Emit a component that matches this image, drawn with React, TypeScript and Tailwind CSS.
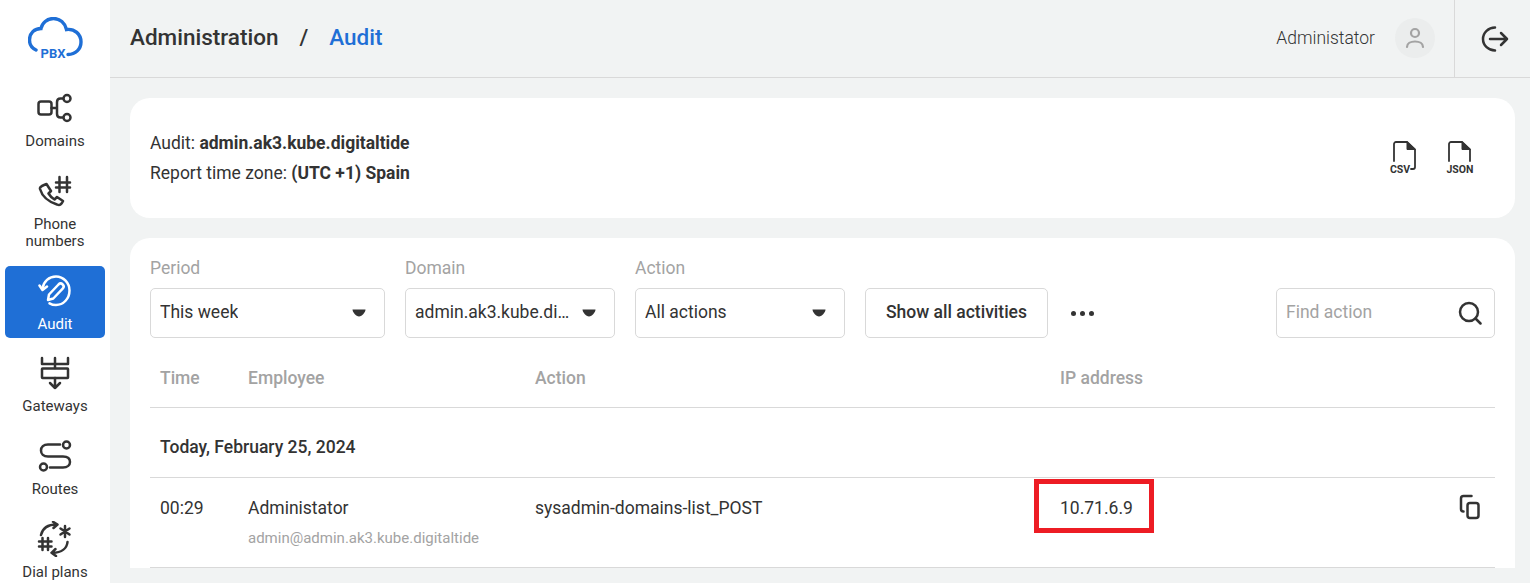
import React from 'react';

const iconProps = {
  fill: 'none',
  stroke: 'currentColor',
  strokeWidth: 2.500,
  strokeLinecap: 'round' as const,
  strokeLinejoin: 'round' as const,
};

function Logo() {
  return (
    <svg width="56" height="44" viewBox="0 0 56 44" className="text-[#1f6fd6]">
      <path
        d="M8 33C3.500 31 1.500 27 1.500 23C1.500 16 6.500 11.500 13 11.500C14 6 19 1.500 25.500 1.500C32 1.500 37 6 38.500 12.500C46.500 11.500 53 17 53 25C53 32 47.500 37.500 40 37.500"
        fill="none"
        stroke="currentColor"
        strokeWidth="3.400"
        strokeLinecap="round"
      />
      <text x="25" y="40.500" textAnchor="middle" fill="currentColor" className="font-['Roboto',sans-serif] text-[13px] font-bold">PBX</text>
    </svg>
  );
}

function DomainsIcon() {
  return (
    <svg width="36" height="32" viewBox="0 0 36 32" {...iconProps}>
      <rect x="1.500" y="9.500" width="13" height="13" rx="2.500" />
      <path d="M14.500 16H20M20 16V10C20 7.500 21 6.500 23.500 6.500H26M20 16V22C20 24.500 21 25.500 23.500 25.500H26" />
      <circle cx="30" cy="6.500" r="3.500" />
      <circle cx="30" cy="25.500" r="3.500" />
    </svg>
  );
}

function PhoneNumbersIcon() {
  return (
    <svg width="34" height="34" viewBox="0 0 34 34" {...iconProps}>
      <path d="M6 11L8.500 10L13 17L10.500 19.500C12 22 14 24 16.500 25.500L19 23L25 27L23.500 29.500C22.500 31 21 31.500 19 30.500C10 27.500 4 22 2 15C1.500 13 3.500 12 6 11Z" />
      <path d="M21.500 3V18M29 3V18M18 8.500H32M18 13.500H32" />
    </svg>
  );
}

function AuditIcon() {
  return (
    <svg width="34" height="34" viewBox="0 0 34 34" {...iconProps} strokeWidth="2.500">
      <path d="M4.500 14.500C5.500 7.500 11 2.500 18 2.500C25.500 2.500 31.500 9 31.500 16.500C31.500 24.500 25.500 31 18 31C15.500 31 13.500 30.400 11.500 29.300" />
      <path d="M1.500 11.500L4.500 16L9 12.500" />
      <path d="M10 26L11 20.500L20.500 10.500C21.700 9.300 23.500 9.300 24.700 10.500C25.900 11.700 25.900 13.500 24.700 14.700L15.300 24.500Z" />
    </svg>
  );
}

function GatewaysIcon() {
  return (
    <svg width="30" height="34" viewBox="0 0 30 34" {...iconProps}>
      <path d="M2 2V8H28V2M15 2V12M15 22V32M10 27L15 32L20 27" />
      <rect x="2" y="12.500" width="26" height="9.500" rx="0.500" />
    </svg>
  );
}

function RoutesIcon() {
  return (
    <svg width="34" height="34" viewBox="0 0 34 34" {...iconProps}>
      <circle cx="28.500" cy="6" r="3.500" />
      <circle cx="5.500" cy="28" r="3.500" />
      <path d="M22 5.500H10C5.500 5.500 3 8 3 11.500C3 15 5.500 17.500 10 17.500H25C29.500 17.500 32 19.500 32 23C32 26 29.500 28.500 25 28.500H12" />
    </svg>
  );
}

function DialPlansIcon() {
  return (
    <svg width="36" height="36" viewBox="0 0 36 36" {...iconProps}>
      <path d="M4 14C5.500 7.500 11 3.500 19.500 3.500M16 0.800L20.500 3.500L16.500 7" />
      <path d="M30.500 21C30 27 25 31.500 15.500 32M19 35L14.500 31.800L18.500 28" />
      <path d="M28 5V16M23.500 7.500L32.500 13.500M32.500 7.500L23.500 13.500" />
      <path d="M5.500 17V29M11 17V29M2 20.500H14.500M2 25.500H14.500" />
    </svg>
  );
}

function FileIcon({ label, hook }: { label: string; hook?: boolean }) {
  return (
    <svg width="36" height="36" viewBox="0 0 36 36" {...iconProps} strokeWidth="1.800" className="overflow-visible">
      <path d={hook ? 'M6 21V4C6 3 7 2 8 2H19L27 9.500V27C27 28.500 26 29 25 29H23' : 'M6 21V4C6 3 7 2 8 2H19L27 9.500V21'} />
      <path d="M19 2V9.500H27Z" fill="currentColor" strokeWidth="1" />
      <text x={hook ? 12 : 17} y="33" textAnchor="middle" fill="currentColor" stroke="none" className="font-['Roboto',sans-serif] text-[10.500px] font-bold">{label}</text>
    </svg>
  );
}

function NavItem({ icon, label, active }: { icon: React.ReactNode; label: React.ReactNode; active?: boolean }) {
  return (
    <div className={`mx-[5px] flex w-[100px] shrink-0 flex-col items-center rounded-[5px] text-center text-[15px] leading-[17px] ${active ? 'h-[72px] bg-[#1f6fd6] pt-[8px] text-white' : 'h-[83px] text-[#333]'}`}>
      <div className="flex h-[34px] items-center justify-center">{icon}</div>
      <div className="mt-[8px]">{label}</div>
    </div>
  );
}

function Select({ label, value, width }: { label: string; value: string; width: string }) {
  return (
    <div className={width}>
      <div className="mb-[9px] text-[17.500px] leading-[21px] text-[#a3a3a3]">{label}</div>
      <div className="flex h-[50px] items-center justify-between rounded-[5px] border border-[#d9d9d9] pr-[18px] pl-[9px] text-[17.500px] text-[#333]">
        <span className="truncate pb-[1px]">{value}</span>
        <svg width="14" height="8" viewBox="0 0 14 8" className="ml-[10px] shrink-0"><path d="M0.500 0.500H13.500C13.500 3 10 7.500 7 7.500C4 7.500 0.500 3 0.500 0.500Z" fill="#333" /></svg>
      </div>
    </div>
  );
}

export default function App() {
  return (
    <div className="relative flex h-[583px] w-[1530px] overflow-hidden bg-[#f1f3f3] font-['Roboto',sans-serif] text-[#333]">
      {/* Sidebar */}
      <aside className="flex w-[110px] shrink-0 flex-col overflow-hidden bg-white">
        <div className="flex h-[91px] shrink-0 justify-center pt-[17px] pl-[1px]"><Logo /></div>
        <NavItem icon={<DomainsIcon />} label="Domains" />
        <NavItem icon={<PhoneNumbersIcon />} label={<>Phone<br />numbers</>} />
        <div className="h-[9px] shrink-0" />
        <NavItem icon={<AuditIcon />} label="Audit" active />
        <div className="h-[18px] shrink-0" />
        <NavItem icon={<GatewaysIcon />} label="Gateways" />
        <NavItem icon={<RoutesIcon />} label="Routes" />
        <NavItem icon={<DialPlansIcon />} label="Dial plans" />
      </aside>

      <main className="min-w-0 flex-1">
        {/* Header */}
        <header className="flex h-[78px] items-center justify-between border-b border-[#d9d9d9] pl-[20px]">
          <div className="flex items-center pb-[2px] text-[22.500px] font-medium">
            <span>Administration</span>
            <span className="mx-[21px]">/</span>
            <span className="text-[#1f6fd6]">Audit</span>
          </div>
          <div className="flex h-full items-center">
            <span className="pb-[1px] text-[17.500px] font-light">Administator</span>
            <div className="mr-[19px] mb-[1px] ml-[20px] flex h-[40px] w-[40px] items-center justify-center rounded-full bg-[#ebeded]">
              <svg width="22" height="24" viewBox="0 0 22 24" fill="none" stroke="#a3a3a3" strokeWidth="2.200" strokeLinecap="round">
                <circle cx="11" cy="7" r="4" />
                <path d="M3 21C3 17.500 6.500 15.500 11 15.500C15.500 15.500 19 17.500 19 21" />
              </svg>
            </div>
            <div className="flex h-full w-[76px] items-center justify-center border-l border-[#d9d9d9] pl-[5px]">
              <svg width="30" height="30" viewBox="0 0 30 30" {...iconProps}>
                <path d="M15 3.500C8.500 3.500 3 8.500 3 15C3 21.500 8.500 26.500 15 26.500" />
                <path d="M10 15H27M21 9L27 15L21 21" />
              </svg>
            </div>
          </div>
        </header>

        <div className="flex flex-col gap-[20px] px-[20px] pt-[20px] pr-[15px]">
          {/* Report info */}
          <section className="flex h-[120px] items-center justify-between rounded-[20px] bg-white pr-[36px] pl-[20px]">
            <div className="text-[17.500px] leading-[30px]">
              <div>Audit: <b className="font-bold">admin.ak3.kube.digitaltide</b></div>
              <div>Report time zone: <b className="font-bold">(UTC +1) Spain</b></div>
            </div>
            <div className="flex gap-[19px]">
              <FileIcon label="CSV" hook />
              <FileIcon label="JSON" />
            </div>
          </section>

          {/* Audit table */}
          <section className="rounded-t-[20px] bg-white px-[20px] pt-[20px]">
            <div className="flex items-end">
              <Select label="Period" value="This week" width="w-[235px]" />
              <Select label="Domain" value="admin.ak3.kube.digitaltide" width="ml-[20px] w-[210px]" />
              <Select label="Action" value="All actions" width="ml-[20px] w-[210px]" />
              <button className="ml-[20px] h-[50px] w-[183px] rounded-[5px] border border-[#d9d9d9] pb-[1px] text-[17.500px] font-medium">Show all activities</button>
              <div className="ml-[23px] flex h-[50px] items-center gap-[4px]">
                <span className="h-[5px] w-[5px] rounded-full bg-[#333]" />
                <span className="h-[5px] w-[5px] rounded-full bg-[#333]" />
                <span className="h-[5px] w-[5px] rounded-full bg-[#333]" />
              </div>
              <div className="ml-auto flex h-[50px] w-[219px] items-center justify-between rounded-[5px] border border-[#d9d9d9] pr-[12px] pl-[9px] text-[17.500px] text-[#a3a3a3]">
                <span className="pb-[1px]">Find action</span>
                <svg width="24" height="24" viewBox="0 0 24 24" {...iconProps} stroke="#333">
                  <circle cx="11" cy="11" r="9" />
                  <path d="M17.500 17.500L22.500 22.500" />
                </svg>
              </div>
            </div>

            <div className="mt-[1px] flex h-[69px] items-center border-b border-[#d9d9d9] pt-[10px] text-[17.500px] font-medium text-[#a3a3a3]">
              <div className="w-[98px] pl-[10px]">Time</div>
              <div className="w-[287px]">Employee</div>
              <div className="w-[525px]">Action</div>
              <div>IP address</div>
            </div>

            <div className="flex h-[70px] items-center border-b border-[#d9d9d9] pt-[10px] pl-[10px] text-[17.500px] font-medium">
              Today, February 25, 2024
            </div>

            <div className="flex h-[90px] border-b border-[#d9d9d9] pt-[19px] text-[17.500px] leading-[22px]">
              <div className="w-[98px] pl-[10px]">00:29</div>
              <div className="w-[287px]">
                <div>Administator</div>
                <div className="mt-[10px] text-[15px] leading-[18px] text-[#a3a3a3]">admin@admin.ak3.kube.digitaltide</div>
              </div>
              <div className="w-[525px]">sysadmin-domains-list_POST</div>
              <div>10.71.6.9</div>
              <svg width="22" height="26" viewBox="0 0 22 26" {...iconProps} className="mt-[-3px] mr-[14px] ml-auto">
                <path d="M12.500 2H4.500C3 2 2 3 2 4.500V15C2 16.500 3 17.500 4.500 17.500" />
                <rect x="8.500" y="9" width="11" height="15" rx="2.500" />
              </svg>
            </div>
          </section>
        </div>
      </main>

      {/* Red highlight around the IP address */}
      <div className="absolute top-[479px] left-[1034px] h-[54px] w-[120px] border-[5px] border-[#ed1c24]" />
    </div>
  );
}
